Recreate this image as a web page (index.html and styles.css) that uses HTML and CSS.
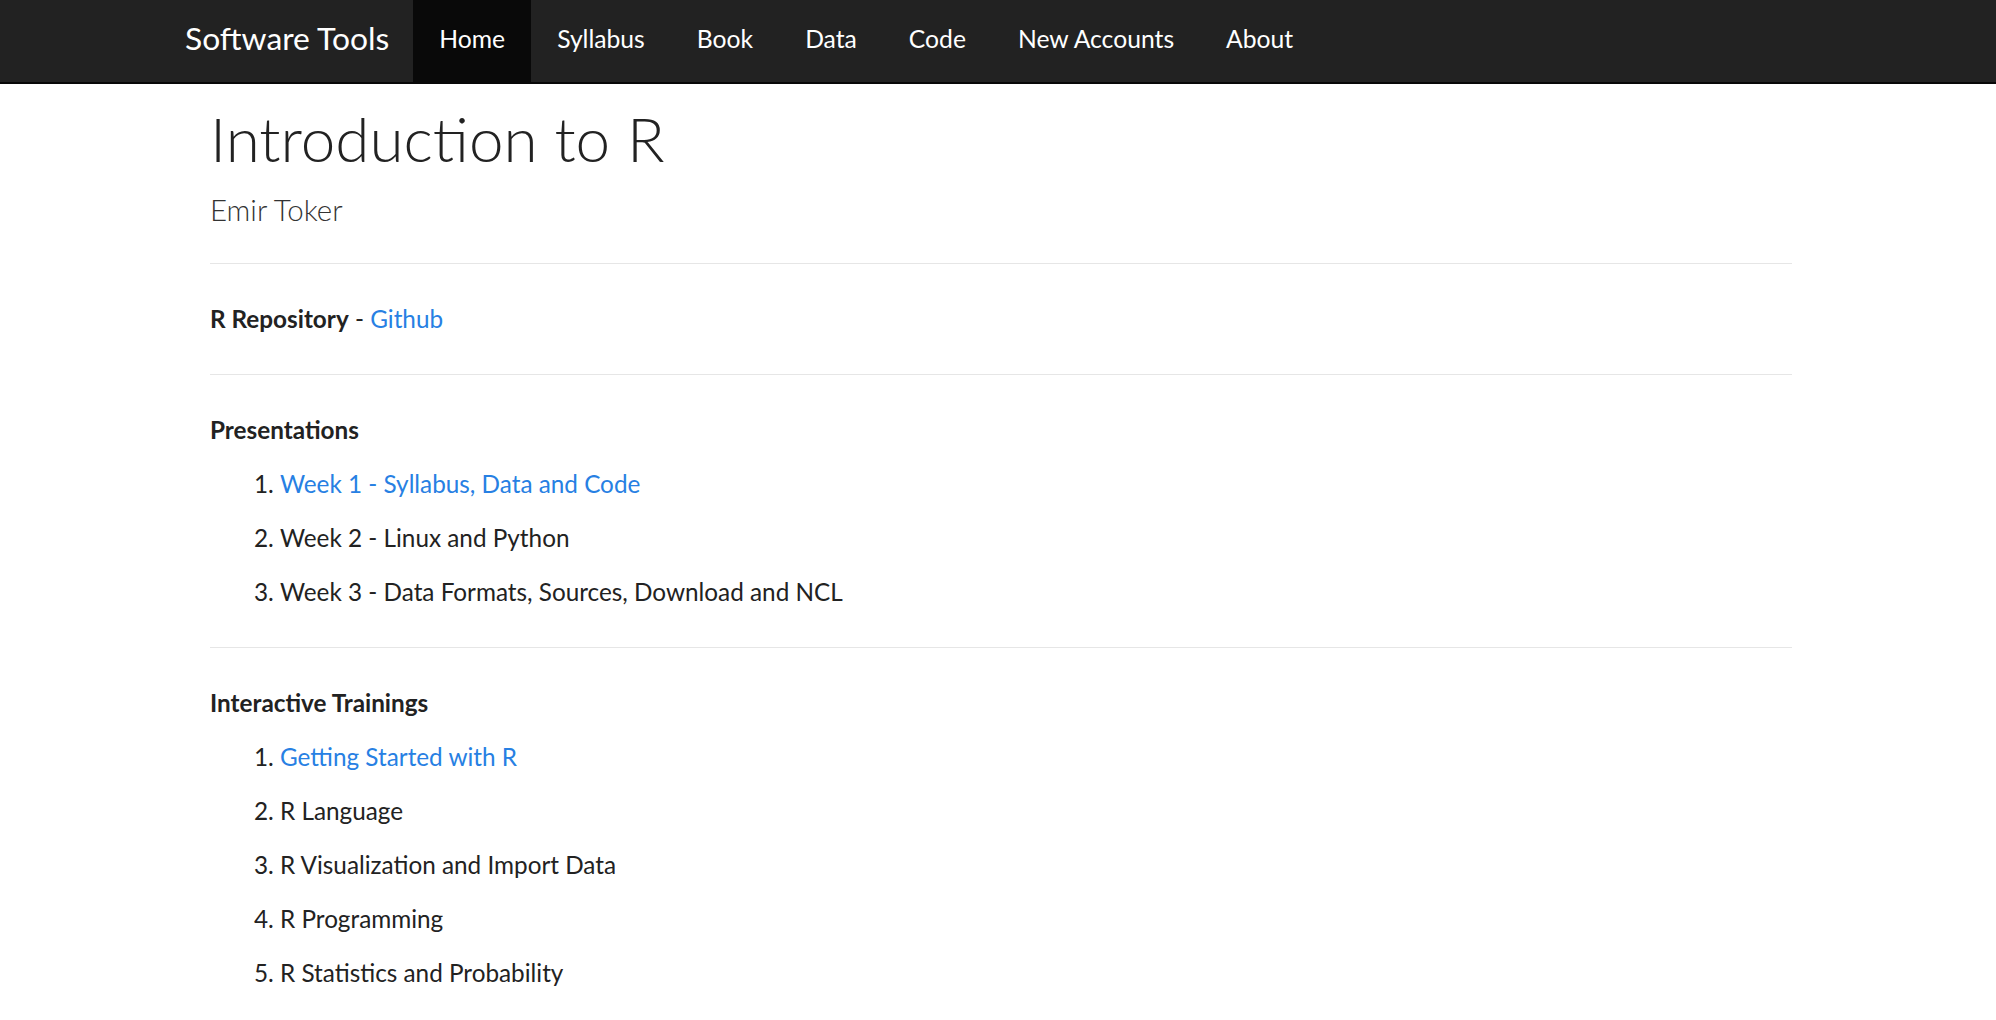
FILE: index.html
```html
<!DOCTYPE html>
<html lang="en">
<head>
<meta charset="utf-8">
<title>Introduction to R</title>
<link rel="stylesheet" href="styles.css">
</head>
<body>
<nav class="navbar">
  <a class="brand" href="#">Software Tools</a>
  <ul class="nav">
    <li class="active"><a href="#">Home</a></li>
    <li><a href="#">Syllabus</a></li>
    <li><a href="#">Book</a></li>
    <li><a href="#">Data</a></li>
    <li><a href="#">Code</a></li>
    <li><a href="#">New Accounts</a></li>
    <li><a href="#">About</a></li>
  </ul>
</nav>
<main class="main">
  <header class="title-block">
    <h1 class="title">Introduction to R</h1>
    <h4 class="author">Emir Toker</h4>
  </header>
  <hr>
  <p><strong>R Repository</strong> - <a href="#">Github</a></p>
  <hr>
  <p><strong>Presentations</strong></p>
  <ol class="list">
    <li><p><a href="#">Week 1 - Syllabus, Data and Code</a></p></li>
    <li><p>Week 2 - Linux and Python</p></li>
    <li><p>Week 3 - Data Formats, Sources, Download and NCL</p></li>
  </ol>
  <hr>
  <p><strong>Interactive Trainings</strong></p>
  <ol class="list">
    <li><p><a href="#">Getting Started with R</a></p></li>
    <li><p>R Language</p></li>
    <li><p>R Visualization and Import Data</p></li>
    <li><p>R Programming</p></li>
    <li><p>R Statistics and Probability</p></li>
  </ol>
</main>
</body>
</html>
```
FILE: styles.css
```css
html, body {
  margin: 0;
  padding: 0;
  background: #ffffff;
}
body {
  font-family: "Lato", "Liberation Sans", sans-serif;
  font-size: 24.3px;
  line-height: 36px;
  color: #222222;
}
a {
  color: #2780e3;
  text-decoration: none;
}
.navbar {
  display: flex;
  align-items: stretch;
  height: 82px;
  background: #222222;
  border-bottom: 2px solid #080808;
  padding-left: 160px;
}
.brand {
  color: #ffffff;
  font-size: 31.8px;
  line-height: 36px;
  padding: 20px 24px 0 25px;
}
.nav {
  display: flex;
  list-style: none;
  margin: 0;
  padding: 0;
}
.nav li a {
  display: block;
  height: 82px;
  box-sizing: border-box;
  padding: 21px 26px 0 26px;
  color: #ffffff;
  font-size: 24.7px;
  line-height: 36px;
}
.nav li.active a {
  background: #090909;
}
.main {
  width: 1582px;
  margin: 0 0 0 210px;
}
.title-block {
  padding-top: 18px;
}
.title {
  margin: 0;
  font-size: 62px;
  line-height: 72px;
  font-weight: 300;
  color: #222222;
}
.author {
  margin: 19px 0 0 0;
  font-size: 29.5px;
  line-height: 33px;
  font-weight: 300;
  color: #333333;
}
hr {
  margin: 37px 0;
  border: 0;
  border-top: 1px solid #e6e6e6;
  height: 0;
}
p {
  margin: 0 0 18px 0;
}
strong {
  font-weight: 700;
}
.list {
  margin: 0 0 18px 0;
  padding-left: 70px;
}
.list li p {
  margin: 0 0 18px 0;
}
```
